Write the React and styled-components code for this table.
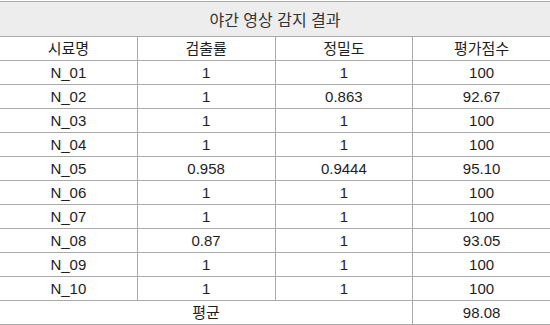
import styled, { createGlobalStyle } from 'styled-components';

const GlobalStyle = createGlobalStyle`
  body {
    margin: 0;
    background: #ffffff;
    font-family: "Liberation Sans", "Noto Sans CJK KR", sans-serif;
    color: #222;
  }
`;

const Wrap = styled.div`
  padding-top: 1px;
  width: 550px;
  overflow: hidden;
`;

const Table = styled.table`
  width: 552px;
  margin-left: -1px;
  border-collapse: collapse;
  table-layout: fixed;
  font-size: 15px;
`;

const Title = styled.th`
  height: 34px;
  background: #ededed;
  border: 1px solid #aaaaaa;
  font-weight: normal;
  font-size: 16px;
  color: #333;
  padding: 0;
`;

const Cell = styled.td`
  height: 23px;
  padding: 0;
  border: 1px solid #aaaaaa;
  text-align: center;
  line-height: 23px;
  color: #1e1e1e;
`;

const rows = [
  ['N_01', '1', '1', '100'],
  ['N_02', '1', '0.863', '92.67'],
  ['N_03', '1', '1', '100'],
  ['N_04', '1', '1', '100'],
  ['N_05', '0.958', '0.9444', '95.10'],
  ['N_06', '1', '1', '100'],
  ['N_07', '1', '1', '100'],
  ['N_08', '0.87', '1', '93.05'],
  ['N_09', '1', '1', '100'],
  ['N_10', '1', '1', '100'],
];

export default function App() {
  return (
    <Wrap>
      <GlobalStyle />
      <Table>
        <thead>
          <tr>
            <Title colSpan={4}>야간 영상 감지 결과</Title>
          </tr>
        </thead>
        <tbody>
          <tr>
            <Cell>시료명</Cell>
            <Cell>검출률</Cell>
            <Cell>정밀도</Cell>
            <Cell>평가점수</Cell>
          </tr>
          {rows.map((r) => (
            <tr key={r[0]}>
              {r.map((v, i) => (
                <Cell key={i}>{v}</Cell>
              ))}
            </tr>
          ))}
          <tr>
            <Cell colSpan={3}>평균</Cell>
            <Cell>98.08</Cell>
          </tr>
        </tbody>
      </Table>
    </Wrap>
  );
}
